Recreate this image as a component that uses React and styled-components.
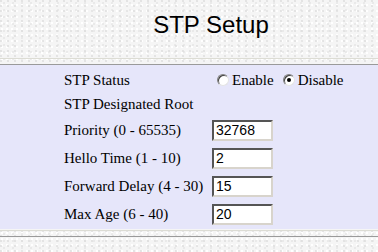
import React, { useState } from 'react';
import styled, { createGlobalStyle } from 'styled-components';

const GlobalStyle = createGlobalStyle`
  html, body {
    margin: 0;
    padding: 0;
  }
  body {
    background-color: #f5f5f5;
    background-image:
      radial-gradient(circle at 1px 1px, #dedede 0.6px, transparent 1px),
      radial-gradient(circle at 4px 3px, #e6e6e6 0.6px, transparent 1px),
      radial-gradient(circle at 2px 5px, #ffffff 0.8px, transparent 1px);
    background-size: 7px 5px, 9px 7px, 5px 6px;
  }
`;

const Page = styled.div`
  width: 378px;
  min-height: 252px;
  display: flex;
  flex-direction: column;
`;

const Title = styled.div`
  font-family: "Liberation Sans", Arial, sans-serif;
  font-size: 24px;
  line-height: 28px;
  color: #000;
  text-align: center;
  padding: 11px 0 0 44px;
  height: 47px;
`;

const Rule = styled.div`
  height: 1px;
  background: #dcdcd4;
  margin-bottom: ${(p) => p.gap}px;
`;

const Panel = styled.div`
  background: #e6e6fa;
  border-top: 1px solid #9a9a9a;
  padding: 3px 0 1px 64px;
  display: grid;
  grid-template-columns: 148px 1fr;
  grid-template-rows: 24px 24px repeat(4, 28px);
  align-items: center;
  font-family: "Liberation Serif", "Times New Roman", serif;
  font-size: 15px;
  line-height: 17px;
  color: #000;
`;

const Label = styled.div`
  white-space: nowrap;
`;

const Radios = styled.div`
  display: flex;
  align-items: center;
  padding-left: 5px;
`;

const RadioLabel = styled.label`
  display: flex;
  align-items: center;
  font-family: "Liberation Serif", "Times New Roman", serif;
  font-size: 15px;
  margin-right: ${(p) => (p.last ? 0 : 9)}px;
`;

const Dot = styled.span`
  box-sizing: border-box;
  width: 12px;
  height: 12px;
  border-radius: 50%;
  border: 1px solid;
  border-color: #808080 #e4e4e4 #e4e4e4 #808080;
  box-shadow: inset 1px 1px 0 #404040;
  background: #fff;
  margin-right: 3px;
  display: flex;
  align-items: center;
  justify-content: center;
  &::after {
    content: '';
    width: 4px;
    height: 4px;
    border-radius: 50%;
    background: ${(p) => (p.on ? '#000' : 'transparent')};
  }
`;

const Field = styled.input`
  box-sizing: border-box;
  width: 61px;
  height: 21px;
  padding: 0 2px;
  margin: 0;
  border: 2px solid;
  border-color: #555 #d8d4cc #d8d4cc #555;
  background: #fff;
  font-family: "Liberation Sans", Arial, sans-serif;
  font-size: 14px;
  color: #000;
  outline: none;
`;

const BottomRule = styled.div`
  height: 1px;
  background: #dcdcd4;
  margin-top: 1px;
`;

const DarkRule = styled.div`
  height: 1px;
  background: #9a9a9a;
  margin-top: 5px;
`;

const fields = [
  ['Priority (0 - 65535)', '32768'],
  ['Hello Time (1 - 10)', '2'],
  ['Forward Delay (4 - 30)', '15'],
  ['Max Age (6 - 40)', '20'],
];

export default function App() {
  const [status, setStatus] = useState('disable');
  return (
    <Page>
      <GlobalStyle />
      <Title>STP Setup</Title>
      <Rule gap={5} />
      <Panel>
        <Label>STP Status</Label>
        <Radios>
          <RadioLabel onClick={() => setStatus('enable')}>
            <Dot on={status === 'enable' ? 1 : 0} />
            Enable
          </RadioLabel>
          <RadioLabel last onClick={() => setStatus('disable')}>
            <Dot on={status === 'disable' ? 1 : 0} />
            Disable
          </RadioLabel>
        </Radios>
        <Label>STP Designated Root</Label>
        <div />
        {fields.map(([label, value]) => (
          <React.Fragment key={label}>
            <Label>{label}</Label>
            <div>
              <Field defaultValue={value} />
            </div>
          </React.Fragment>
        ))}
      </Panel>
      <BottomRule />
      <DarkRule />
    </Page>
  );
}
